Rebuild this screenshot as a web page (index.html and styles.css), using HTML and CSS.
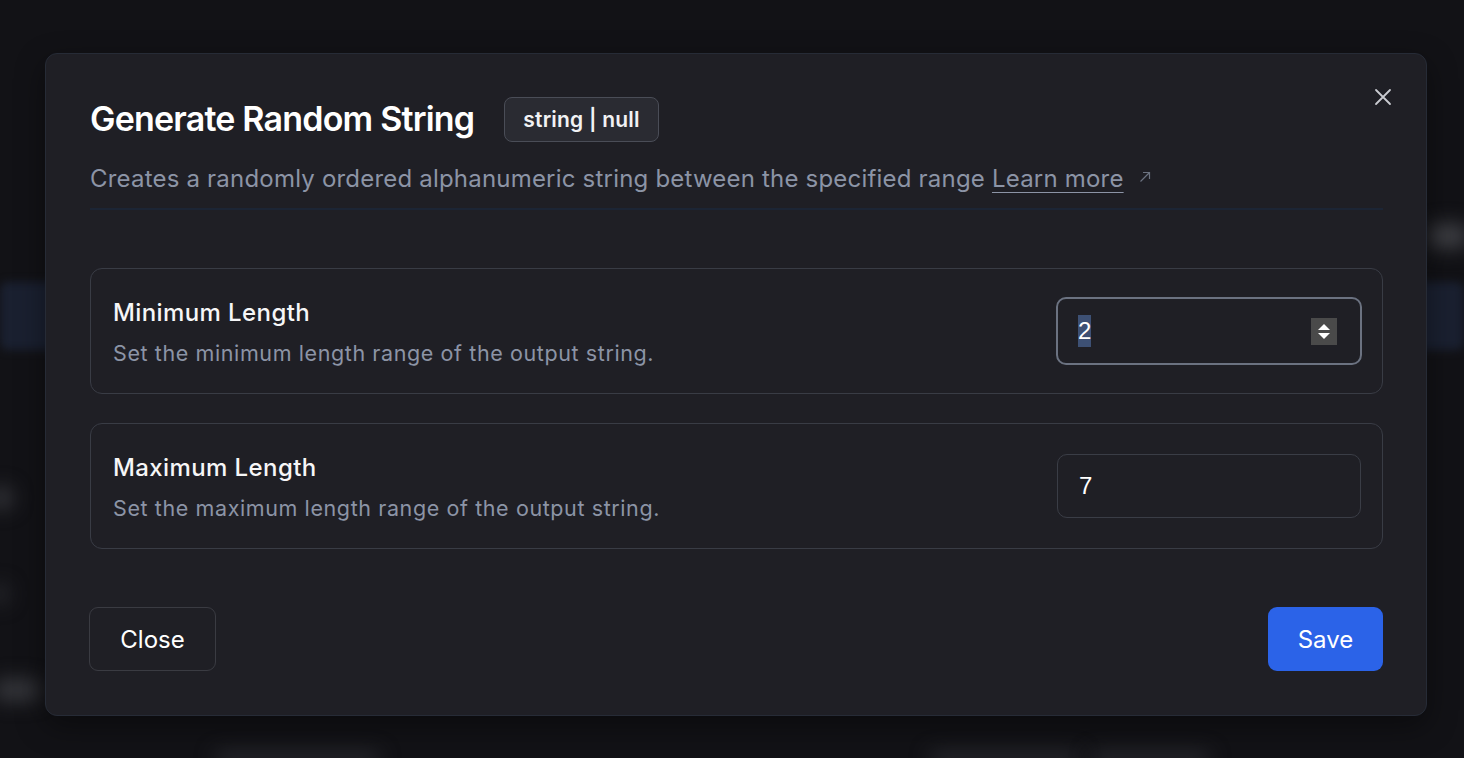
FILE: index.html
```html
<!DOCTYPE html>
<html lang="en">
<head>
    <meta charset="UTF-8">
    <meta name="viewport" content="width=device-width, initial-scale=1.0">
    <title>Generate Random String</title>
    <link rel="stylesheet" href="styles.css">
</head>
<body>
    <div class="backdrop">
        <div class="ghost ghost-right"></div>
        <div class="ghost ghost-band"></div>
        <div class="ghost ghost-left1"></div>
        <div class="ghost ghost-left2"></div>
        <div class="ghost ghost-left3"></div>
        <div class="ghost ghost-bottom1"></div>
        <div class="ghost ghost-bottom2"></div>
        <div class="ghost ghost-bottom3"></div>
    </div>

    <div class="overlay">
        <div class="modal">
            <button class="close-x" aria-label="Close">
                <svg width="20" height="20" viewBox="0 0 20 20" fill="none" stroke="currentColor" stroke-width="1.8" stroke-linecap="round">
                    <path d="M3 3L17 17M17 3L3 17"/>
                </svg>
            </button>

            <div class="header">
                <div class="title-row">
                    <h2>Generate Random String</h2>
                    <span class="badge">string | null</span>
                </div>
                <p class="desc">
                    Creates a randomly ordered alphanumeric string between the specified range
                    <a href="#" class="learn">Learn more</a>
                    <svg class="ext" width="12" height="12" viewBox="0 0 12 12" fill="none" stroke="currentColor" stroke-width="1.2">
                        <path d="M1.5 10.5L10.5 1.5M4 1.5H10.5V8"/>
                    </svg>
                </p>
            </div>

            <div class="fields">
                <div class="field-card">
                    <div class="field-text">
                        <div class="field-name">Minimum Length</div>
                        <div class="field-help">Set the minimum length range of the output string.</div>
                    </div>
                    <div class="num-input focused">
                        <span class="value selected">2</span>
                        <span class="spinner">
                            <svg width="26" height="27" viewBox="0 0 26 27">
                                <path d="M13 6L19 12H7Z" fill="#fff"/>
                                <path d="M13 21L19 15H7Z" fill="#fff"/>
                            </svg>
                        </span>
                    </div>
                </div>

                <div class="field-card">
                    <div class="field-text">
                        <div class="field-name">Maximum Length</div>
                        <div class="field-help">Set the maximum length range of the output string.</div>
                    </div>
                    <div class="num-input">
                        <span class="value">7</span>
                    </div>
                </div>
            </div>

            <div class="footer">
                <button class="btn btn-outline">Close</button>
                <button class="btn btn-primary">Save</button>
            </div>
        </div>
    </div>
</body>
</html>
```

FILE: styles.css
```css
* {
    box-sizing: border-box;
}
body {
    margin: 0;
    width: 1464px;
    height: 758px;
    overflow: hidden;
    background-color: #121216;
    font-family: Inter, "Noto Sans", sans-serif;
    color: #fff;
}
.backdrop {
    position: absolute;
    inset: 0;
}
.ghost {
    position: absolute;
    background: #3a3b40;
    filter: blur(10px);
    border-radius: 8px;
}
.ghost-right {
    left: 1428px;
    top: 225px;
    width: 40px;
    height: 22px;
    background: #44454a;
}
.ghost-band {
    left: 0;
    top: 282px;
    width: 1464px;
    height: 68px;
    background: #1a2030;
    filter: blur(4px);
}
.ghost-left1 {
    left: -10px;
    top: 488px;
    width: 22px;
    height: 20px;
}
.ghost-left2 {
    left: -10px;
    top: 585px;
    width: 18px;
    height: 18px;
    background: #2c2d32;
}
.ghost-left3 {
    left: -6px;
    top: 680px;
    width: 46px;
    height: 20px;
}
.ghost-bottom1 {
    left: 215px;
    top: 752px;
    width: 165px;
    height: 14px;
    background: #2a2b30;
}
.ghost-bottom2 {
    left: 930px;
    top: 752px;
    width: 150px;
    height: 14px;
    background: #2a2b30;
}
.ghost-bottom3 {
    left: 1090px;
    top: 752px;
    width: 120px;
    height: 14px;
    background: #2a2b30;
}
.overlay {
    position: absolute;
    inset: 0;
    padding: 53px 37px 0 45px;
}
.modal {
    position: relative;
    width: 1382px;
    height: 663px;
    background-color: #1f1f25;
    border: 1px solid #262b36;
    border-radius: 12px;
    padding: 42px 43px 44px 44px;
    box-shadow: 0 10px 30px rgba(0, 0, 0, 0.4);
    display: flex;
    flex-direction: column;
}
.close-x {
    position: absolute;
    top: 33px;
    right: 33px;
    background: none;
    border: none;
    padding: 0;
    color: #c9cbd1;
    cursor: pointer;
}
.header {
    border-bottom: 2px solid #1c2535;
    padding-bottom: 14px;
}
.title-row {
    display: flex;
    align-items: center;
    gap: 30px;
}
.title-row h2 {
    margin: 0;
    font-size: 34px;
    font-weight: 600;
    letter-spacing: -0.8px;
    line-height: 46px;
}
.badge {
    display: inline-block;
    border: 1px solid #4a4d57;
    background-color: #2a2b32;
    border-radius: 8px;
    padding: 0 18px;
    height: 45px;
    line-height: 43px;
    font-size: 21px;
    font-weight: 600;
    letter-spacing: 0.2px;
    color: #f1f2f4;
}
.desc {
    margin: 22px 0 0;
    font-size: 24px;
    letter-spacing: 0.2px;
    color: #8c94a6;
    line-height: 30px;
}
.learn {
    color: #8c94a6;
    text-decoration: underline;
    text-underline-offset: 5px;
    text-decoration-thickness: 1px;
}
.ext {
    margin-left: 8px;
    color: #6b7280;
    vertical-align: 4px;
}
.fields {
    margin-top: 58px;
    display: flex;
    flex-direction: column;
    gap: 29px;
}
.field-card {
    height: 126px;
    border: 1px solid #393c45;
    border-radius: 12px;
    padding: 0 21px 0 22px;
    display: flex;
    align-items: center;
    justify-content: space-between;
}
.field-text {
    padding-top: 2px;
}
.field-name {
    font-size: 24px;
    font-weight: 450;
    letter-spacing: 0.4px;
    color: #f6f6f7;
    line-height: 30px;
}
.field-help {
    margin-top: 11px;
    font-size: 21.5px;
    color: #8c94a6;
    letter-spacing: 0.6px;
    line-height: 28px;
}
.num-input {
    width: 304px;
    height: 64px;
    border: 1px solid #3a3d46;
    border-radius: 10px;
    display: flex;
    align-items: center;
    justify-content: space-between;
    padding: 0 22px 0 21px;
    font-family: "Liberation Sans", Arial, sans-serif;
    font-size: 24px;
    color: #fff;
}
.num-input.focused {
    width: 306px;
    height: 68px;
    border: 2px solid #6b7281;
    padding: 0 23px 0 20px;
    margin-right: -1px;
}
.value.selected {
    background-color: #3d5074;
    padding: 2px 0;
}
.spinner {
    display: flex;
    width: 26px;
    height: 27px;
    background-color: #4a4a4a;
}
.footer {
    margin-top: auto;
    display: flex;
    justify-content: space-between;
}
.btn {
    height: 64px;
    border-radius: 9px;
    font-family: Inter, "Noto Sans", sans-serif;
    font-size: 24px;
    color: #fff;
    cursor: pointer;
}
.btn-outline {
    width: 127px;
    background: transparent;
    border: 1px solid #3a3b42;
    margin-left: -1px;
}
.btn-primary {
    width: 115px;
    background-color: #2b63e8;
    border: none;
}
.btn-primary:hover {
    background-color: #2456cc;
}
```
